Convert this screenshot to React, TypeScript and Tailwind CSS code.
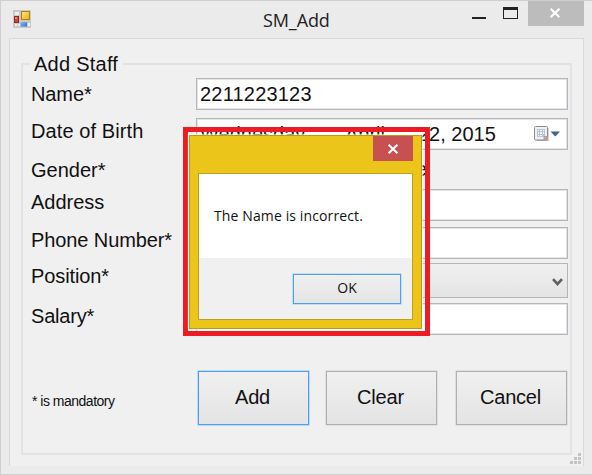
import React from "react";

const FORM_FONT = "font-['Liberation_Sans',Arial,sans-serif]";
const UI_FONT = "font-['Open_Sans','Noto_Sans',sans-serif]";

function Label({ children, className = "" }: { children: React.ReactNode; className?: string }) {
  return (
    <span className={`w-[173px] shrink-0 pl-[8px] text-[20px] leading-6 whitespace-nowrap ${className}`}>
      {children}
    </span>
  );
}

function Field({ children, className = "" }: { children?: React.ReactNode; className?: string }) {
  return (
    <div
      className={`flex h-8 w-[372px] items-center border border-[#b4b6bc] bg-white text-[20px] leading-6 shadow-[inset_0_0_0_1px_#e3e4e8] ${className}`}
    >
      {children}
    </div>
  );
}

function Cross({ className = "" }: { className?: string }) {
  return (
    <svg width="12" height="10" viewBox="0 0 12 10" className={className}>
      <path d="M1.6 0.8L10.4 9.2M10.4 0.8L1.6 9.2" stroke="white" strokeWidth="2.1" fill="none" />
    </svg>
  );
}

function AppIcon() {
  return (
    <svg width="18" height="18" viewBox="0 0 18 18">
      <defs>
        <linearGradient id="gold" x1="0" y1="0" x2="1" y2="1">
          <stop offset="0" stopColor="#ffe880" />
          <stop offset="1" stopColor="#eeb010" />
        </linearGradient>
        <linearGradient id="blue" x1="0" y1="0" x2="1" y2="1">
          <stop offset="0" stopColor="#8dbcff" />
          <stop offset="1" stopColor="#2f6bd0" />
        </linearGradient>
      </defs>
      <rect width="18" height="18" fill="#c9c9c9" />
      <path d="M2 2h4v3H2zM2 14h2v2H2zM5 14h2v2H5zM15 13h2v3h-2z" fill="#efefef" />
      <rect x="8.5" y="1.5" width="8" height="8" fill="url(#gold)" stroke="#ad8110" />
      <rect x="1.5" y="6.5" width="4" height="6" fill="#c94a40" stroke="#97261f" />
      <path d="M2 7h2v2H2z" fill="#e28b82" />
      <rect x="7.5" y="12" width="6.5" height="4.5" fill="url(#blue)" />
    </svg>
  );
}

function CalendarIcon() {
  return (
    <svg width="28" height="18" viewBox="0 0 28 18">
      <path d="M2 3h13.5v13H4z" fill="#b9a9a4" />
      <path d="M1.5 2.5a1 1 0 0 1 1-1h11a1 1 0 0 1 1 1v9l-3 3.5h-9a1 1 0 0 1-1-1z" fill="#f1eff0" stroke="#92898b" />
      <path d="M4 4h8v8H4z" fill="#b8c3d3" />
      <path d="M5 5h1v1H5zM7 5h2v1H7zM10 5h1v1h-1zM5 7h1v2H5zM7 7h2v2H7zM10 7h1v2h-1zM5 10h1v1H5zM7 10h2v1H7z" fill="#f3f5f8" />
      <path d="M11 14.5V11.5h3z" fill="#d5cac7" stroke="#988b88" strokeWidth=".7" />
      <path d="M17.5 6.5h9.5l-4.75 5z" fill="#465f91" />
    </svg>
  );
}

function FormButton({ children, primary = false }: { children: React.ReactNode; primary?: boolean }) {
  return (
    <button
      className={`h-[54px] w-[111px] border-[1.5px] bg-gradient-to-b from-[#f0f0f0] to-[#e4e4e4] pr-[2px] pb-[3px] text-[20px] leading-6 tracking-[-0.2px] ${
        primary ? "border-[#4ba0f5] shadow-[0_0_0_0.5px_#8ac0f5]" : "border-[#b0b0b0] shadow-[0_0_0_0.5px_#cfcfcf]"
      }`}
    >
      {children}
    </button>
  );
}

function ErrorDialog() {
  return (
    <div className="absolute top-[126px] left-[182px] h-[209px] w-[247px] border-5 border-[#ed1c24] pt-[3px] pl-px">
      <div className="flex h-[194px] w-[233px] flex-col border border-[#b99a1c] bg-[#ecc51a] px-2 pb-2 shadow-[0_0_1px_1px_rgba(255,255,255,0.6)]">
        <div className="flex h-[37px] shrink-0 justify-end">
          <div className="flex h-[25px] w-10 items-center justify-center bg-[#c75050]">
            <Cross />
          </div>
        </div>
        <div className="flex grow flex-col border border-[#c0a01c] bg-white">
          <div className={`h-[84px] pt-[33px] pl-[15px] text-[14px] leading-[18px] tracking-[0.12px] whitespace-nowrap ${UI_FONT}`}>
            The Name is incorrect.
          </div>
          <div className="flex grow justify-end bg-[#f0f0f0] pt-4 pr-[11px]">
            <button
              className={`h-[30px] w-[108px] border-[1.5px] border-[#4ba0f5] bg-gradient-to-b from-[#f0f0f0] to-[#e4e4e4] pb-0.5 text-[14px] leading-5 shadow-[0_0_0_0.5px_#9fcaf5] ${UI_FONT}`}
            >
              OK
            </button>
          </div>
        </div>
      </div>
    </div>
  );
}

export default function App() {
  return (
    <main className={`relative flex h-[475px] w-[592px] flex-col overflow-hidden border border-r-0 border-[#cfcfcf] bg-[#ebebeb] text-[#111] ${FORM_FONT}`}>
      <header className="flex h-[37px] shrink-0 items-start">
        <div className="w-[262px] pt-[9px] pl-3">
          <AppIcon />
        </div>
        <h1 className={`pt-[7px] text-[18px] leading-6 tracking-[-0.1px] text-[#222] ${UI_FONT}`}>SM_Add</h1>
        <div className="ml-auto flex pr-2">
          <div className="mt-4 mr-[17px] h-0.5 w-3.5 bg-[#222]" />
          <div className="mt-1.5 mr-2.5 h-3 w-[15px] border border-t-3 border-[#222]" />
          <div className="flex h-[25px] w-14 items-center justify-center bg-[#bcbcbc] pb-0.5 pr-0.5">
            <Cross />
          </div>
        </div>
      </header>

      <section className="mr-2 ml-2 flex h-[428px] flex-col border border-b-0 border-[#d9d9d9] bg-[#f0f0f0] pt-6 pl-[11px]">
        <fieldset className="flex h-[392px] w-[551px] flex-col border-2 border-[#e3e3e3]">
          <div className="-mt-[13px] ml-[7px] h-[25px] w-[93px] bg-[#f0f0f0] pl-1 text-[20px] leading-[25px] tracking-[0.25px] whitespace-nowrap">
            Add Staff
          </div>
          <div className="mt-px flex h-10">
            <Label className="pt-[4px] tracking-[-0.1px]">Name*</Label>
            <Field className="pl-[3px] tracking-[0.2px]">2211223123</Field>
          </div>
          <div className="flex h-8">
            <Label className="pt-px tracking-[0.1px]">Date of Birth</Label>
            <Field className="pl-[3px]">
              <span className="w-[145px]">Wednesday</span>
              <span className="w-[73px]">April</span>
              <span className="w-[115px] whitespace-nowrap">22, 2015</span>
              <CalendarIcon />
            </Field>
          </div>
          <div className="flex h-[39px]">
            <Label className="pt-[8px]">Gender*</Label>
            <span className="w-[231px] pt-[7px] text-right text-[20px] leading-6">Female</span>
          </div>
          <div className="flex h-[38px]">
            <Label className="pt-px">Address</Label>
            <Field />
          </div>
          <div className="flex h-9">
            <Label className="pt-px tracking-[-0.1px]">Phone Number*</Label>
            <Field />
          </div>
          <div className="flex h-10">
            <Label className="pt-px tracking-[-0.1px]">Position*</Label>
            <div className="flex h-[35px] w-[372px] items-center justify-end border-[1.5px] border-[#b5b5b5] bg-gradient-to-b from-[#f0f0f0] to-[#e4e4e4] pr-1">
              <svg width="11" height="9" viewBox="0 0 11 9" className="mt-1">
                <path d="M1 1.2L5.5 6L10 1.2" fill="none" stroke="#606060" strokeWidth="2.6" />
              </svg>
            </div>
          </div>
          <div className="flex h-[68px]">
            <Label className="pt-px tracking-[-0.2px]">Salary*</Label>
            <Field />
          </div>
          <div className="flex">
            <span className="w-[175px] pt-[22px] pl-[9px] text-[14px] leading-4 tracking-[-0.5px]">* is mandatory</span>
            <div className="flex">
              <FormButton primary>Add</FormButton>
              <div className="w-[17px]" />
              <FormButton>Clear</FormButton>
              <div className="w-[19px]" />
              <FormButton>Cancel</FormButton>
            </div>
          </div>
        </fieldset>
        <div className="-mt-0.5 mr-[2px] flex h-3 justify-end">
          <svg width="11" height="11" viewBox="0 0 11 11">
            <path d="M8 0h3v3H8zM4 4h3v3H4zM8 4h3v3H8zM0 8h3v3H0zM4 8h3v3H4zM8 8h3v3H8z" fill="#c4c4c4" />
          </svg>
        </div>
      </section>

      <ErrorDialog />
    </main>
  );
}
